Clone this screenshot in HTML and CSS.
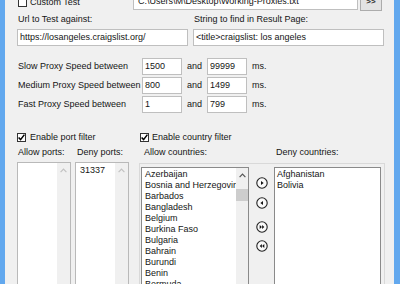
FILE: index.html
```html
<!DOCTYPE html>
<html>
<head>
<meta charset="utf-8">
<link rel="stylesheet" href="styles.css">
</head>
<body>
<div class="window">
  <div class="edge edge-l"></div>
  <div class="client">
    <div class="top-row">
      <label class="chk chk-custom"><span class="box"></span><span>Custom Test</span></label>
      <div class="tb tb-file">C:\Users\M\Desktop\Working-Proxies.txt</div>
      <div class="btn">&gt;&gt;</div>
    </div>

    <div class="pair">
      <div class="field field-url">
        <div class="lbl">Url to Test against:</div>
        <div class="tb">https://losangeles.craigslist.org/</div>
      </div>
      <div class="field field-str">
        <div class="lbl">String to find in Result Page:</div>
        <div class="tb">&lt;title&gt;craigslist: los angeles</div>
      </div>
    </div>

    <div class="speeds">
      <div class="sp-lbl">Slow Proxy Speed between</div>
      <div class="tb tb-num">1500</div>
      <div class="sp-and">and</div>
      <div class="tb tb-num">99999</div>
      <div class="sp-ms">ms.</div>

      <div class="sp-lbl">Medium Proxy Speed between</div>
      <div class="tb tb-num">800</div>
      <div class="sp-and">and</div>
      <div class="tb tb-num">1499</div>
      <div class="sp-ms">ms.</div>

      <div class="sp-lbl">Fast Proxy Speed between</div>
      <div class="tb tb-num">1</div>
      <div class="sp-and">and</div>
      <div class="tb tb-num">799</div>
      <div class="sp-ms">ms.</div>
    </div>

    <div class="filters">
      <label class="chk chk-port"><span class="box"><svg width="9" height="9" viewBox="0 0 9 9"><path d="M1.6 4.4 L3.6 6.6 L7.4 1.6" fill="none" stroke="#000" stroke-width="1.5"/></svg></span><span>Enable port filter</span></label>
      <label class="chk"><span class="box"><svg width="9" height="9" viewBox="0 0 9 9"><path d="M1.6 4.4 L3.6 6.6 L7.4 1.6" fill="none" stroke="#000" stroke-width="1.5"/></svg></span><span>Enable country filter</span></label>
    </div>

    <div class="list-labels">
      <div class="ll ll-ap">Allow ports:</div>
      <div class="ll ll-dp">Deny ports:</div>
      <div class="ll ll-ac">Allow countries:</div>
      <div class="ll">Deny countries:</div>
    </div>

    <div class="lists">
      <div class="plist">
        <div class="items"></div>
        <div class="sbar"><div class="sbtn"><svg width="7" height="5" viewBox="0 0 7 5"><path d="M0.6 4.2 L3.5 1.2 L6.4 4.2" fill="none" stroke="#c2c2c2" stroke-width="1.2"/></svg></div></div>
      </div>
      <div class="plist plist-deny">
        <div class="items"><div>31337</div></div>
        <div class="sbar"><div class="sbtn"><svg width="7" height="5" viewBox="0 0 7 5"><path d="M0.6 4.2 L3.5 1.2 L6.4 4.2" fill="none" stroke="#c2c2c2" stroke-width="1.2"/></svg></div></div>
      </div>

      <div class="panel">
        <div class="clist clist-allow">
          <div class="items">
            <div>Azerbaijan</div>
            <div>Bosnia and Herzegovina</div>
            <div>Barbados</div>
            <div>Bangladesh</div>
            <div>Belgium</div>
            <div>Burkina Faso</div>
            <div>Bulgaria</div>
            <div>Bahrain</div>
            <div>Burundi</div>
            <div>Benin</div>
            <div>Bermuda</div>
          </div>
          <div class="sbar sbar-c">
            <div class="sbtn sbtn-c"><svg width="7" height="5" viewBox="0 0 7 5"><path d="M0.6 4.2 L3.5 1.2 L6.4 4.2" fill="none" stroke="#555" stroke-width="1.2"/></svg></div>
            <div class="thumb"></div>
          </div>
        </div>

        <div class="moves">
          <div class="mv mv-1"><svg width="12" height="12" viewBox="0 0 12 12"><circle cx="6" cy="6" r="5.2" fill="#fafafa" stroke="#222" stroke-width="1.1"/><polygon points="5,3.9 7.6,6 5,8.1" fill="#111"/></svg></div>
          <div class="mv mv-2"><svg width="12" height="12" viewBox="0 0 12 12"><circle cx="6" cy="6" r="5.2" fill="#fafafa" stroke="#222" stroke-width="1.1"/><polygon points="7,3.9 4.4,6 7,8.1" fill="#111"/></svg></div>
          <div class="mv mv-3"><svg width="12" height="12" viewBox="0 0 12 12"><circle cx="6" cy="6" r="5.2" fill="#fafafa" stroke="#222" stroke-width="1.1"/><polygon points="3.7,4.1 5.9,6 3.7,7.9" fill="#111"/><polygon points="6.1,4.1 8.3,6 6.1,7.9" fill="#111"/></svg></div>
          <div class="mv mv-4"><svg width="12" height="12" viewBox="0 0 12 12"><circle cx="6" cy="6" r="5.2" fill="#fafafa" stroke="#222" stroke-width="1.1"/><polygon points="8.3,4.1 6.1,6 8.3,7.9" fill="#111"/><polygon points="5.9,4.1 3.7,6 5.9,7.9" fill="#111"/></svg></div>
        </div>

        <div class="clist clist-deny">
          <div class="items">
            <div>Afghanistan</div>
            <div>Bolivia</div>
          </div>
        </div>
      </div>
    </div>
  </div>
  <div class="edge edge-r"></div>
</div>
</body>
</html>
```

FILE: styles.css
```css
html, body {
  margin: 0;
  padding: 0;
}

body {
  font-family: "Liberation Sans", Arial, sans-serif;
  font-size: 9px;
  line-height: 11px;
  color: #151515;
}

.window {
  width: 400px;
  height: 284px;
  display: flex;
  overflow: hidden;
  background: #f0f0f0;
}

.edge {
  flex: none;
  background: #62a8ee;
}

.edge-l {
  width: 5px;
}

.edge-r {
  width: 6px;
  margin-left: auto;
}

.client {
  width: 389px;
  box-sizing: border-box;
  padding-left: 12px;
  margin-top: -7px;
  display: flex;
  flex-direction: column;
}

/* generic controls */
.tb {
  box-sizing: border-box;
  height: 17px;
  background: #fff;
  border: 1px solid #bfbfbf;
  padding: 0 2px;
  line-height: 15px;
  white-space: nowrap;
  overflow: hidden;
}

.chk {
  display: flex;
  align-items: center;
  gap: 3px;
  height: 11px;
}

.box {
  box-sizing: border-box;
  width: 9px;
  height: 9px;
  border: 1px solid #333;
  background: #fff;
  display: flex;
  align-items: center;
  justify-content: center;
  flex: none;
}

.box svg {
  display: block;
  flex: none;
}

/* top row */
.top-row {
  display: flex;
  align-items: flex-start;
  height: 18px;
}

.chk-custom {
  width: 116px;
  box-sizing: border-box;
  padding-left: 1px;
  margin-top: 4px;
  flex: none;
}

.tb-file {
  width: 225px;
  flex: none;
  padding-left: 4px;
}

.btn {
  box-sizing: border-box;
  width: 22px;
  height: 18px;
  margin-left: 2px;
  border: 1px solid #acacac;
  background: #e3e3e3;
  text-align: center;
  line-height: 15px;
  font-size: 8px;
  font-weight: bold;
  color: #333;
}

/* url / string */
.pair {
  display: flex;
  gap: 5px;
  margin-top: 3px;
}

.field {
  display: flex;
  flex-direction: column;
}

.field .lbl {
  margin-bottom: 4px;
  padding-left: 1px;
}

.field-url {
  width: 171px;
}

.field-str {
  width: 191px;
}

/* speeds */
.speeds {
  display: grid;
  grid-template-columns: 125px 40px 25px 40px auto;
  grid-auto-rows: 17px;
  row-gap: 2px;
  margin-top: 12px;
  align-items: center;
}

.sp-lbl {
  padding-left: 1px;
}

.sp-and {
  padding-left: 5px;
}

.sp-ms {
  padding-left: 5px;
}

.tb-num {
  padding-left: 2px;
}

/* filters */
.filters {
  display: flex;
  margin-top: 19px;
}

.chk-port {
  width: 123px;
  gap: 4px;
}

.list-labels {
  display: flex;
  margin-top: 4px;
}

.ll {
  padding-left: 1px;
}

.ll-ap {
  width: 58px;
}

.ll-dp {
  width: 65px;
}

.ll-ac {
  width: 131px;
  padding-left: 2px;
}

/* lists */
.lists {
  display: flex;
  align-items: flex-start;
  margin-top: 4px;
}

.plist {
  box-sizing: border-box;
  width: 54px;
  height: 130px;
  border: 1px solid #b9b9b9;
  background: #fff;
  display: flex;
  flex: none;
}

.plist-deny {
  margin-left: 4px;
}

.plist .items {
  flex: 1;
  padding: 2px 4px;
}

.sbar {
  width: 13px;
  background: #f0f0f0;
  flex: none;
  display: flex;
  flex-direction: column;
}

.sbtn {
  height: 15px;
  display: flex;
  align-items: center;
  justify-content: center;
}

.sbtn svg {
  display: block;
}

.panel {
  box-sizing: border-box;
  width: 246px;
  height: 130px;
  margin-left: 10px;
  margin-top: 1px;
  border: 1px solid #d9d9d9;
  padding: 3px 2px 0 1px;
  display: flex;
  align-items: flex-start;
  flex: none;
}

.clist {
  box-sizing: border-box;
  height: 130px;
  border: 1px solid #8a8a8a;
  background: #fff;
  display: flex;
  flex: none;
}

.clist .items {
  flex: 1;
  min-width: 0;
  padding: 1px 3px;
  white-space: nowrap;
  overflow: hidden;
}

.clist-allow {
  width: 108px;
}

.clist-deny {
  width: 107px;
}

.clist-deny .items {
  padding-left: 2px;
}

.sbar-c {
  width: 12px;
}

.sbtn-c {
  height: 14px;
}

.thumb {
  height: 12px;
  margin-top: 7px;
  background: #cdcdcd;
}

.moves {
  width: 25px;
  flex: none;
  display: flex;
  flex-direction: column;
  align-items: center;
}

.mv {
  width: 12px;
  height: 12px;
}

.mv svg {
  display: block;
}

.mv-1 {
  margin-top: 10px;
}

.mv-2 {
  margin-top: 8px;
}

.mv-3 {
  margin-top: 12px;
}

.mv-4 {
  margin-top: 7px;
}
```
